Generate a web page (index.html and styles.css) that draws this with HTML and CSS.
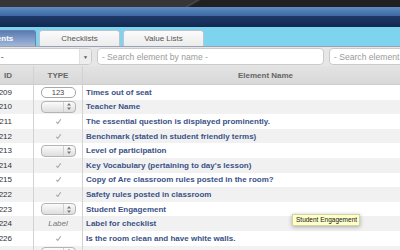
FILE: index.html
```html
<!DOCTYPE html>
<html>
<head>
<meta charset="utf-8">
<link rel="stylesheet" href="styles.css">
</head>
<body>
<div class="topbar"></div>
<div class="blueband"></div>
<div class="navyband"></div>
<div class="page">
  <div class="tabbar">
    <div class="tab active">Elements</div>
    <div class="tab">Checklists</div>
    <div class="tab">Value Lists</div>
  </div>
  <div class="filters">
    <div class="field select"><span class="seltext">- All types -</span><span class="arrow">&#9660;</span></div>
    <div class="field search">- Search element by name -</div>
    <div class="field search2">- Search element by label -</div>
  </div>
  <div class="table">
    <div class="row head">
      <div class="c-id">ID</div>
      <div class="c-type">TYPE</div>
      <div class="c-name">Element Name</div>
    </div>
    <div class="row">
      <div class="c-id">209</div>
      <div class="c-type"><span class="num">123</span></div>
      <div class="c-name">Times out of seat</div>
    </div>
    <div class="row alt">
      <div class="c-id">210</div>
      <div class="c-type"><span class="sel"><span class="step"><svg width="4" height="7" viewBox="0 0 4 7"><path d="M2 0 L4 2.6 L0 2.6 Z M2 7 L4 4.4 L0 4.4 Z" fill="#777"/></svg></span></span></div>
      <div class="c-name">Teacher Name</div>
    </div>
    <div class="row">
      <div class="c-id">211</div>
      <div class="c-type"><span class="chk"><svg width="7" height="7" viewBox="0 0 7 7"><path d="M1.2 3.8 L2.8 5.4 L5.8 1.3" fill="none" stroke="#a8a8a8" stroke-width="1.1"/></svg></span></div>
      <div class="c-name">The essential question is displayed prominently.</div>
    </div>
    <div class="row alt">
      <div class="c-id">212</div>
      <div class="c-type"><span class="chk"><svg width="7" height="7" viewBox="0 0 7 7"><path d="M1.2 3.8 L2.8 5.4 L5.8 1.3" fill="none" stroke="#a8a8a8" stroke-width="1.1"/></svg></span></div>
      <div class="c-name">Benchmark (stated in student friendly terms)</div>
    </div>
    <div class="row">
      <div class="c-id">213</div>
      <div class="c-type"><span class="sel"><span class="step"><svg width="4" height="7" viewBox="0 0 4 7"><path d="M2 0 L4 2.6 L0 2.6 Z M2 7 L4 4.4 L0 4.4 Z" fill="#777"/></svg></span></span></div>
      <div class="c-name">Level of participation</div>
    </div>
    <div class="row alt">
      <div class="c-id">214</div>
      <div class="c-type"><span class="chk"><svg width="7" height="7" viewBox="0 0 7 7"><path d="M1.2 3.8 L2.8 5.4 L5.8 1.3" fill="none" stroke="#a8a8a8" stroke-width="1.1"/></svg></span></div>
      <div class="c-name">Key Vocabulary (pertaining to day's lesson)</div>
    </div>
    <div class="row">
      <div class="c-id">215</div>
      <div class="c-type"><span class="chk"><svg width="7" height="7" viewBox="0 0 7 7"><path d="M1.2 3.8 L2.8 5.4 L5.8 1.3" fill="none" stroke="#a8a8a8" stroke-width="1.1"/></svg></span></div>
      <div class="c-name">Copy of Are classroom rules posted in the room?</div>
    </div>
    <div class="row alt">
      <div class="c-id">222</div>
      <div class="c-type"><span class="chk"><svg width="7" height="7" viewBox="0 0 7 7"><path d="M1.2 3.8 L2.8 5.4 L5.8 1.3" fill="none" stroke="#a8a8a8" stroke-width="1.1"/></svg></span></div>
      <div class="c-name">Safety rules posted in classroom</div>
    </div>
    <div class="row">
      <div class="c-id">223</div>
      <div class="c-type"><span class="sel"><span class="step"><svg width="4" height="7" viewBox="0 0 4 7"><path d="M2 0 L4 2.6 L0 2.6 Z M2 7 L4 4.4 L0 4.4 Z" fill="#777"/></svg></span></span></div>
      <div class="c-name">Student Engagement</div>
    </div>
    <div class="row alt">
      <div class="c-id">224</div>
      <div class="c-type"><span class="lbl">Label</span></div>
      <div class="c-name">Label for checklist</div>
    </div>
    <div class="row">
      <div class="c-id">226</div>
      <div class="c-type"><span class="chk"><svg width="7" height="7" viewBox="0 0 7 7"><path d="M1.2 3.8 L2.8 5.4 L5.8 1.3" fill="none" stroke="#a8a8a8" stroke-width="1.1"/></svg></span></div>
      <div class="c-name">Is the room clean and have white walls.</div>
    </div>
    <div class="row alt">
      <div class="c-id">227</div>
      <div class="c-type"><span class="sel"><span class="step"><svg width="4" height="7" viewBox="0 0 4 7"><path d="M2 0 L4 2.6 L0 2.6 Z M2 7 L4 4.4 L0 4.4 Z" fill="#777"/></svg></span></span></div>
      <div class="c-name">Grouping of students</div>
    </div>
  </div>
</div>
<div class="tooltip">Student Engagement</div>
</body>
</html>
```
FILE: styles.css
```css
body {
  margin: 0;
  width: 400px;
  height: 250px;
  overflow: hidden;
  position: relative;
  background: #fff;
  font-family: "Liberation Sans", Arial, sans-serif;
}
.topbar {
  height: 7px;
  background: linear-gradient(150deg, #363636 98px, #4a4a4a 99px, #202020 101px);
}
.blueband {
  height: 9px;
  background: linear-gradient(#5f8cc3, #3c69a1);
}
.navyband {
  height: 11px;
  background: linear-gradient(#1e3968, #13284f);
}
.page {
  margin-left: -45px;
  width: 493px;
}
.tabbar {
  height: 20px;
  box-sizing: border-box;
  padding-top: 3px;
  background: #7ed3ee;
  border-bottom: 1px solid #98a2b4;
  display: flex;
  align-items: flex-end;
  gap: 3px;
}
.tab {
  width: 81px;
  height: 16px;
  box-sizing: border-box;
  border: 1px solid #bcc4cc;
  border-bottom: none;
  border-radius: 3px 3px 0 0;
  background: linear-gradient(#fbfbfb, #ececec);
  color: #555;
  font-size: 8px;
  display: flex;
  align-items: center;
  justify-content: center;
}
.tab.active {
  background: linear-gradient(#5a7bb2, #a2b7d8);
  border-color: #6a82ad;
  color: #fff;
  font-weight: bold;
}
.filters {
  height: 19px;
  box-sizing: border-box;
  padding: 1px 0 0 2px;
  background: #e6e6e6;
  display: flex;
  gap: 5px;
}
.field {
  height: 17px;
  box-sizing: border-box;
  border: 1px solid #cacaca;
  border-radius: 4px;
  background: #fff;
  color: #9a9a9a;
  font-size: 8.6px;
  display: flex;
  align-items: center;
  padding-left: 4px;
  white-space: nowrap;
  overflow: hidden;
}
.select {
  width: 136px;
  padding-left: 3px;
  color: #555;
}
.seltext {
  flex: 1;
}
.arrow {
  width: 11px;
  align-self: stretch;
  display: flex;
  align-items: center;
  justify-content: center;
  background: #eeeeee;
  border-left: 1px solid #e0e0e0;
  color: #555;
  font-size: 5px;
}
.search {
  width: 229px;
}
.search2 {
  width: 120px;
}
.row {
  display: grid;
  grid-template-columns: 79px 49px 1fr;
  height: 14.6px;
  font-size: 8px;
  background: #fff;
}
.row.alt {
  background: #f1f1f1;
}
.row > div {
  display: flex;
  align-items: center;
  white-space: nowrap;
  overflow: hidden;
}
.c-id {
  justify-content: flex-end;
  padding-right: 21px;
  border-right: 1px solid #d2d2d2;
  color: #333;
}
.c-type {
  justify-content: center;
  border-right: 1px solid #d2d2d2;
}
.c-name {
  padding-left: 3px;
  color: #3a5186;
  font-weight: bold;
}
.row.head {
  height: 19px;
  background: linear-gradient(#e3e3e3, #d8d8d8);
  border-bottom: 1px solid #cfcfcf;
  box-sizing: border-box;
}
.row.head > div {
  color: #666;
  font-weight: bold;
}
.row.head .c-name {
  justify-content: center;
  padding-left: 0;
}
.num {
  width: 35px;
  height: 11px;
  box-sizing: border-box;
  border: 1px solid #a6a6a6;
  border-radius: 5px;
  background: #fff;
  color: #444;
  font-size: 7.5px;
  display: flex;
  align-items: center;
  justify-content: center;
}
.sel {
  width: 35px;
  height: 12px;
  box-sizing: border-box;
  border: 1px solid #b4b4b4;
  border-radius: 4px;
  background: linear-gradient(#fbfbfb, #dedede);
  display: flex;
  justify-content: flex-end;
}
.step {
  width: 11px;
  border-left: 1px solid #d0d0d0;
  display: flex;
  align-items: center;
  justify-content: center;
}
.chk {
  width: 8px;
  height: 8px;
  display: flex;
  align-items: center;
  justify-content: center;
}
.lbl {
  color: #777;
  font-style: italic;
  font-size: 8px;
}
.tooltip {
  position: absolute;
  left: 292px;
  top: 214px;
  padding: 1px 2px 2px 3px;
  background: #ffffcc;
  border: 1px solid #d4d4a0;
  box-shadow: 0 1px 4px rgba(0, 0, 0, 0.3);
  font-size: 6.5px;
  color: #111;
  white-space: nowrap;
}
```
